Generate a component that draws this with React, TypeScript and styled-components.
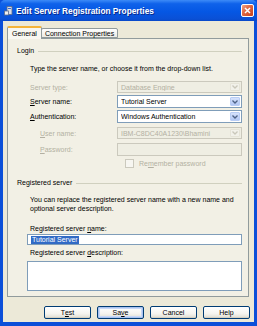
import React from "react";
import styled, { createGlobalStyle } from "styled-components";

const GlobalStyle = createGlobalStyle`
  html, body { margin: 0; padding: 0; background: #fff; }
  body { font-family: "Liberation Sans", Arial, sans-serif; }
  * { box-sizing: border-box; }
`;

const Window = styled.div`
  width: 257px;
  height: 326px;
  display: flex;
  flex-direction: column;
  background: #0b4fd9;
  overflow: hidden;
`;

const TitleBar = styled.div`
  height: 21px;
  flex: none;
  display: flex;
  align-items: center;
  padding: 0 3px 0 4px;
  gap: 3px;
  background: linear-gradient(#3d8bf7 0%, #0f62ea 18%, #0557e4 55%, #0a50d6 90%, #0848c8 100%);
  border-radius: 5px 5px 0 0;
`;

const Title = styled.div`
  flex: 1;
  color: #fff;
  font-weight: bold;
  font-size: 8.3px;
  text-shadow: 1px 1px 0 #0a2a8a;
  white-space: nowrap;
`;

const CloseBtn = styled.div`
  width: 13px;
  height: 13px;
  border: 1px solid #fff;
  border-radius: 2px;
  background: linear-gradient(135deg, #f0a58a 0%, #e06a45 40%, #c8401c 100%);
  display: flex;
  align-items: center;
  justify-content: center;
`;

const Frame = styled.div`
  flex: 1;
  display: flex;
  flex-direction: column;
  background: #ece9d8;
  margin: 0 3px 4px 3px;
  padding: 5px 4px 3px 4px;
`;

const TabStrip = styled.div`
  display: flex;
  align-items: flex-end;
  height: 12px;
  position: relative;
  z-index: 1;
`;

const Tab = styled.div<{ $active?: boolean }>`
  font-size: 7px;
  color: #000;
  white-space: nowrap;
  border: 1px solid #919b9c;
  border-bottom: ${(p) => (p.$active ? "none" : "1px solid #919b9c")};
  border-top: ${(p) => (p.$active ? "2px solid #f5b43a" : "1px solid #919b9c")};
  border-radius: 2px 2px 0 0;
  background: ${(p) => (p.$active ? "#f8f7f1" : "linear-gradient(#ffffff, #ecebe4)")};
  height: ${(p) => (p.$active ? "13px" : "10px")};
  margin-bottom: ${(p) => (p.$active ? "-1px" : "0")};
  padding: ${(p) => (p.$active ? "1px 4px 0 4px" : "0 3px")};
  line-height: 9px;
  margin-left: ${(p) => (p.$active ? "0" : "-1px")};
`;

const Panel = styled.div`
  flex: 1;
  margin-right: 1px;
  border: 1px solid #919b9c;
  background: #f2f0e5;
  padding: 7px 6px 4px 9px;
  display: flex;
  flex-direction: column;
`;

const GroupHeader = styled.div<{ $mt?: number }>`
  display: flex;
  align-items: center;
  gap: 4px;
  font-size: 7px;
  line-height: 9px;
  height: 9px;
  margin-top: ${(p) => p.$mt ?? 0}px;
  &::after {
    content: "";
    flex: 1;
    border-top: 1px solid #d0d0bf;
    margin-top: 1px;
  }
`;

const Text = styled.div<{ $mt?: number; $indent?: number }>`
  font-size: 7px;
  line-height: 9px;
  color: #000;
  margin-top: ${(p) => p.$mt ?? 0}px;
  padding-left: ${(p) => p.$indent ?? 0}px;
`;

const FormRow = styled.div<{ $mt?: number; $indent?: number }>`
  display: grid;
  grid-template-columns: ${(p) => 87 - (p.$indent ?? 0)}px 1fr;
  align-items: center;
  margin-top: ${(p) => p.$mt ?? 0}px;
  padding-left: ${(p) => 13 + (p.$indent ?? 0)}px;
`;

const Label = styled.div<{ $disabled?: boolean }>`
  font-size: 7px;
  color: ${(p) => (p.$disabled ? "#b3b0a2" : "#000")};
  white-space: nowrap;
  u { text-decoration: underline; }
`;

const Combo = styled.div<{ $disabled?: boolean; $h?: number }>`
  height: ${(p) => p.$h ?? 13}px;
  border: 1px solid ${(p) => (p.$disabled ? "#cbc9bd" : "#7f9db9")};
  background: ${(p) => (p.$disabled ? "#efeee3" : "#fff")};
  display: flex;
  align-items: center;
  padding: 0 1px 0 3px;
  font-size: 7px;
  color: ${(p) => (p.$disabled ? "#b3b0a2" : "#000")};
  white-space: nowrap;
  overflow: hidden;
`;

const ComboText = styled.span`
  flex: 1;
  overflow: hidden;
`;

const Arrow = styled.div<{ $disabled?: boolean }>`
  width: 10px;
  height: calc(100% - 2px);
  border-radius: 1px;
  border: 1px solid ${(p) => (p.$disabled ? "#e6e4d8" : "#b9cdf5")};
  background: ${(p) => (p.$disabled ? "#f2f1ea" : "linear-gradient(#d6e2fc, #b2c7f4)")};
  display: flex;
  align-items: center;
  justify-content: center;
`;

const TextBox = styled.div<{ $disabled?: boolean; $h?: number; $mt?: number }>`
  height: ${(p) => p.$h ?? 13}px;
  margin-top: ${(p) => p.$mt ?? 0}px;
  border: 1px solid ${(p) => (p.$disabled ? "#cbc9bd" : "#7f9db9")};
  background: ${(p) => (p.$disabled ? "#efeee3" : "#fff")};
  font-size: 7px;
  display: flex;
  align-items: center;
  padding: 0 3px;
`;

const CheckRow = styled.div<{ $mt?: number }>`
  display: flex;
  align-items: center;
  gap: 5px;
  margin-top: ${(p) => p.$mt ?? 0}px;
  padding-left: 108px;
  font-size: 7px;
  color: #b3b0a2;
`;

const CheckBox = styled.div`
  width: 9px;
  height: 9px;
  border: 1px solid #cbc9bd;
  background: #f7f6f1;
`;

const Section = styled.div`
  padding-left: 10px;
  display: flex;
  flex-direction: column;
`;

const Selected = styled.span`
  background: #316ac5;
  color: #fff;
  padding: 0 1px;
  line-height: 8px;
`;

const ButtonRow = styled.div`
  display: flex;
  justify-content: flex-end;
  gap: 6px;
  margin-top: 9px;
`;

const Button = styled.div<{ $default?: boolean }>`
  width: 47px;
  height: 13px;
  border: 1px solid #003c74;
  border-radius: 2px;
  background: linear-gradient(#ffffff 0%, #f5f4ef 60%, #dedcd1 100%);
  box-shadow: ${(p) =>
    p.$default ? "inset 0 0 0 1px #a9c3f0, inset 0 0 0 2px #c8d8f6" : "inset 0 -1px 0 #d6d0c0"};
  font-size: 7px;
  display: flex;
  align-items: center;
  justify-content: center;
  color: #000;
`;

const Chevron = ({ disabled }: { disabled?: boolean }) => (
  <svg width="6" height="4" viewBox="0 0 6 4">
    <path d="M0.5 0.5 L3 3 L5.5 0.5" fill="none" stroke={disabled ? "#c9c7ba" : "#4d6185"} strokeWidth="1.3" />
  </svg>
);

const DropDown = ({ text, disabled, h }: { text: string; disabled?: boolean; h?: number }) => (
  <Combo $disabled={disabled} $h={h}>
    <ComboText>{text}</ComboText>
    <Arrow $disabled={disabled}>
      <Chevron disabled={disabled} />
    </Arrow>
  </Combo>
);

const AppIcon = () => (
  <svg width="9" height="10" viewBox="0 0 9 10">
    <rect x="3" y="0.5" width="5" height="8" fill="#d8dde8" stroke="#5a6a8a" strokeWidth="0.8" />
    <rect x="0.5" y="5" width="4" height="4" fill="#f0f0f0" stroke="#5a6a8a" strokeWidth="0.8" />
    <rect x="4" y="2" width="3" height="1" fill="#3c6bd0" />
  </svg>
);

export default function App() {
  return (
    <>
      <GlobalStyle />
      <Window>
        <TitleBar>
          <AppIcon />
          <Title>Edit Server Registration Properties</Title>
          <CloseBtn>
            <svg width="7" height="7" viewBox="0 0 7 7">
              <path d="M1 1 L6 6 M6 1 L1 6" stroke="#fff" strokeWidth="1.5" />
            </svg>
          </CloseBtn>
        </TitleBar>
        <Frame>
          <TabStrip>
            <Tab $active>General</Tab>
            <Tab>Connection Properties</Tab>
          </TabStrip>
          <Panel>
            <GroupHeader>Login</GroupHeader>
            <Text $mt={9} $indent={13}>Type the server name, or choose it from the drop-down list.</Text>
            <FormRow $mt={8}>
              <Label $disabled>Server type:</Label>
              <DropDown text="Database Engine" disabled h={12} />
            </FormRow>
            <FormRow $mt={2}>
              <Label><u>S</u>erver name:</Label>
              <DropDown text="Tutorial Server" />
            </FormRow>
            <FormRow $mt={2}>
              <Label><u>A</u>uthentication:</Label>
              <DropDown text="Windows Authentication" />
            </FormRow>
            <FormRow $mt={4} $indent={10}>
              <Label $disabled><u>U</u>ser name:</Label>
              <DropDown text="IBM-C8DC40A1230\Bhamini" disabled h={12} />
            </FormRow>
            <FormRow $mt={4} $indent={10}>
              <Label $disabled><u>P</u>assword:</Label>
              <TextBox $disabled />
            </FormRow>
            <CheckRow $mt={3}>
              <CheckBox />
              <span>Re<u>m</u>ember password</span>
            </CheckRow>
            <GroupHeader $mt={10}>Registered server</GroupHeader>
            <Text $mt={8} $indent={13}>
              You can replace the registered server name with a new name and
              <br />
              optional server description.
            </Text>
            <Section>
              <Text $mt={11} $indent={3}>Registered server <u>n</u>ame:</Text>
              <TextBox $h={11} $mt={1}>
                <Selected>Tutorial Server</Selected>
              </TextBox>
              <Text $mt={3} $indent={3}>Registered server <u>d</u>escription:</Text>
              <TextBox $h={30} $mt={4} />
            </Section>
          </Panel>
          <ButtonRow>
            <Button>T<u>e</u>st</Button>
            <Button $default>Sa<u>v</u>e</Button>
            <Button>Cancel</Button>
            <Button>Help</Button>
          </ButtonRow>
        </Frame>
      </Window>
    </>
  );
}
